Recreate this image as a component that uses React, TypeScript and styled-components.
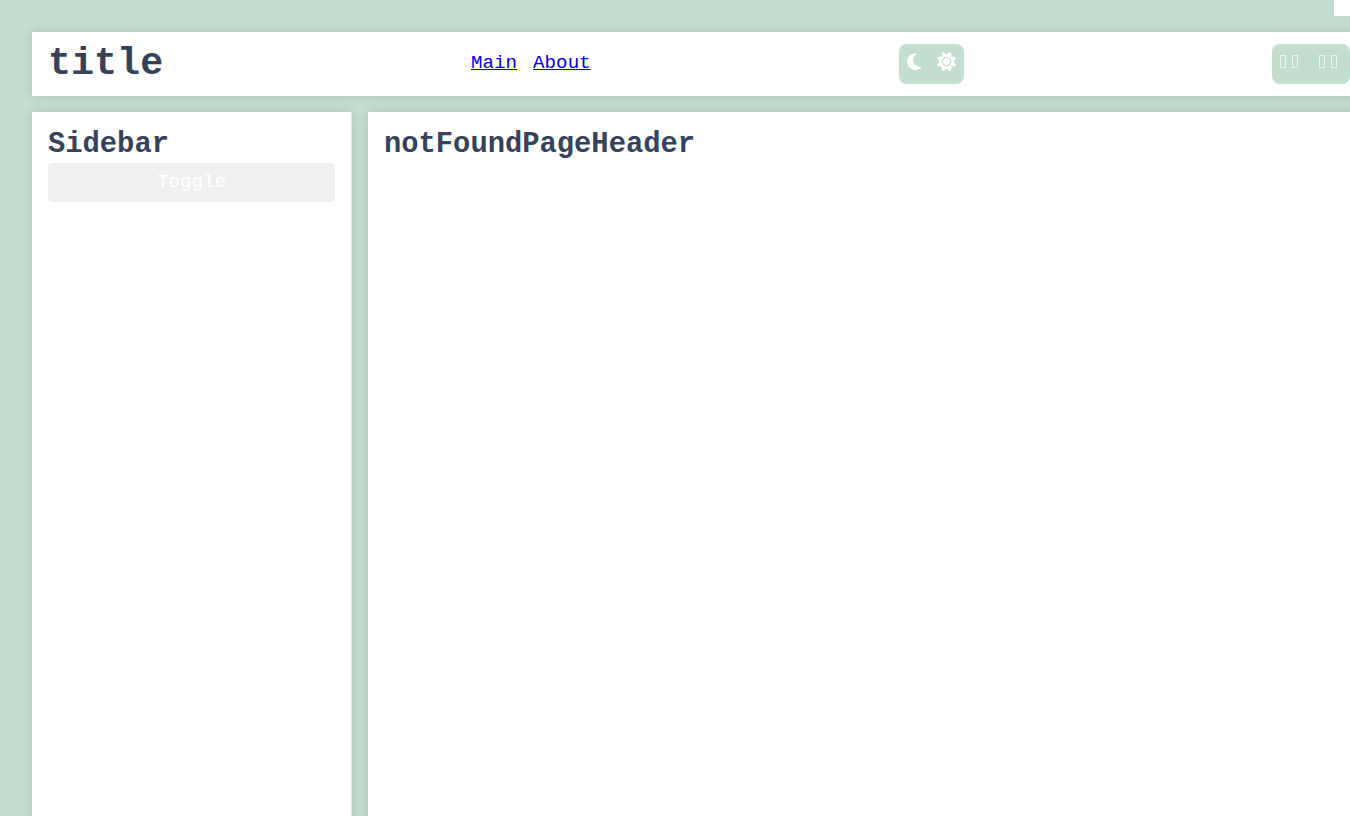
import React from 'react';
import styled, { createGlobalStyle } from 'styled-components';
import { FaMoon, FaSun } from 'react-icons/fa6';

const GlobalStyle = createGlobalStyle`
  *, *::before, *::after { box-sizing: border-box; margin: 0; padding: 0; }
  html, body { height: 100%; overflow: hidden; background: #fff; }
  body { font: 19.2px/1.2 "Liberation Mono", monospace; color: #35425b; }
`;

const Page = styled.div`
  width: 1334px;
  height: 100vh;
  padding: 16px 0 0 16px;
  background: #c2decf;
`;

const Layout = styled.div`
  display: flex;
  flex-direction: column;
  gap: 16px;
  width: 1366px;
  height: 100vh;
  padding: 16px 16px 0;
  background: #c2decf;
`;

const Panel = styled.div`
  background: #fff;
  box-shadow: 0 0 10px rgba(0, 0, 0, 0.12);
`;

const Header = styled(Panel).attrs({ as: 'header' })`
  display: flex;
  align-items: center;
  justify-content: space-between;
  height: 64px;
  padding: 0 16px;
`;

const Title = styled.h1`
  font-size: 38.4px;
  line-height: 1.2;
`;

const Nav = styled.nav`
  display: flex;
  gap: 16px;
`;

const NavLink = styled.a`
  color: #0000ee;
  text-decoration: underline;
`;

const Switcher = styled.div`
  display: flex;
  align-items: center;
  gap: 16px;
  height: 40px;
  padding: 8px;
  border-radius: 8px;
  background: #c2decf;
`;

const SwitchButton = styled.button`
  display: flex;
  margin-bottom: 4px;
  border: 0;
  background: none;
  color: #fff;
  font: inherit;
  cursor: pointer;
`;

const IconButton = styled(SwitchButton)<{ $width: string }>`
  svg {
    width: ${({ $width }) => $width};
    height: 1em;
  }
`;

const FlagSwitch = styled(SwitchButton)`
  gap: 6px;
  width: 23.04px;
  margin-bottom: 5px;
`;

const FlagCell = styled.span`
  width: 6px;
  height: 13px;
  border: 1px solid rgba(255, 255, 255, 0.7);
`;

const Columns = styled.div`
  display: flex;
  flex: 1;
  gap: 16px;
`;

const Sidebar = styled(Panel).attrs({ as: 'aside' })`
  width: 320px;
  padding: 16px;
  border-right: 1px solid #e5e5e5;
`;

const Main = styled(Panel).attrs({ as: 'main' })`
  flex: 1;
  padding: 16px;
`;

const Heading = styled.h2`
  font-size: 28.8px;
  line-height: 1.2;
`;

const ToggleButton = styled.button`
  display: block;
  width: 100%;
  padding: 8px;
  border: 0;
  border-radius: 4px;
  background: #efefef;
  color: #fff;
  font: inherit;
`;

const FlagButton = ({ label }: { label: string }) => (
  <FlagSwitch aria-label={label}>
    <FlagCell />
    <FlagCell />
  </FlagSwitch>
);

export default function App() {
  return (
    <Page>
      <GlobalStyle />
      <Layout>
        <Header>
          <Title>title</Title>
          <Nav>
            <NavLink href="#main">Main</NavLink>
            <NavLink href="#about">About</NavLink>
          </Nav>
          <Switcher>
            <IconButton $width="0.75em"><FaMoon /></IconButton>
            <IconButton $width="1em"><FaSun /></IconButton>
          </Switcher>
          <Switcher>
            <FlagButton label="ru" />
            <FlagButton label="en" />
          </Switcher>
        </Header>
        <Columns>
          <Sidebar>
            <Heading>Sidebar</Heading>
            <ToggleButton>Toggle</ToggleButton>
          </Sidebar>
          <Main>
            <Heading>notFoundPageHeader</Heading>
          </Main>
        </Columns>
      </Layout>
    </Page>
  );
}
